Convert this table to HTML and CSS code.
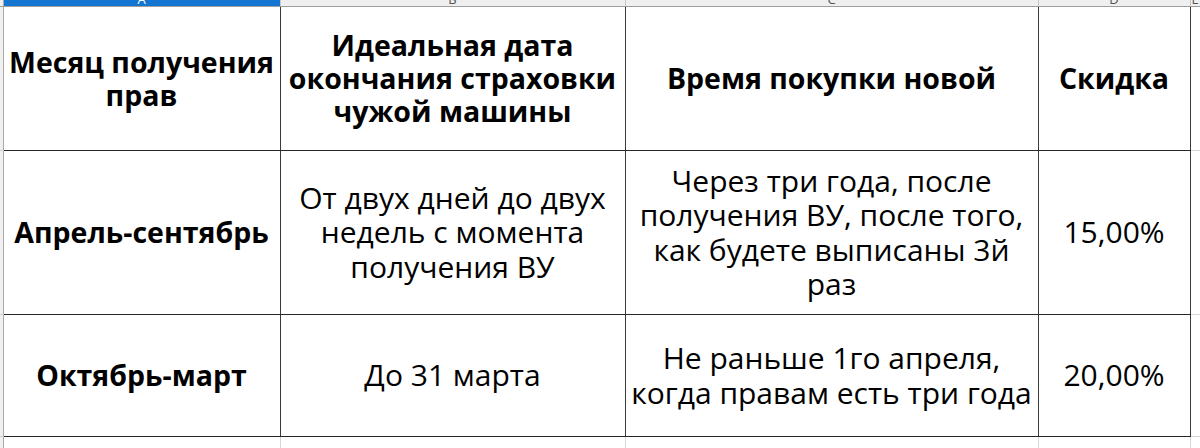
FILE: index.html
```html
<!DOCTYPE html>
<html lang="ru">
<head>
<meta charset="utf-8">
<title>Скидка</title>
<link rel="stylesheet" href="styles.css">
</head>
<body>
<table class="sheet">
  <colgroup>
    <col class="c-rh"><col class="c-a"><col class="c-b"><col class="c-c"><col class="c-d"><col class="c-e">
  </colgroup>
  <tr class="colhead">
    <th class="rh"></th>
    <th class="sel"><span>A</span></th>
    <th><span>B</span></th>
    <th><span>C</span></th>
    <th><span>D</span></th>
    <th class="edge"><span>E</span></th>
  </tr>
  <tr class="r-head first">
    <th class="rh"></th>
    <td class="bold">Месяц получения<br>прав</td>
    <td class="bold">Идеальная дата<br>окончания страховки<br>чужой машины</td>
    <td class="bold">Время покупки новой</td>
    <td class="bold">Скидка</td>
    <td class="grid"></td>
  </tr>
  <tr class="r-one">
    <th class="rh"></th>
    <td class="bold">Апрель-сентябрь</td>
    <td>От двух дней до двух<br>недель с момента<br>получения ВУ</td>
    <td>Через три года, после<br>получения ВУ, после того,<br>как будете выписаны 3й<br>раз</td>
    <td>15,00%</td>
    <td class="grid"></td>
  </tr>
  <tr class="r-two">
    <th class="rh"></th>
    <td class="bold">Октябрь-март</td>
    <td>До 31 марта</td>
    <td>Не раньше 1го апреля,<br>когда правам есть три года</td>
    <td>20,00%</td>
    <td class="grid"></td>
  </tr>
  <tr class="r-empty">
    <th class="rh"></th>
    <td class="grid"></td>
    <td class="grid"></td>
    <td class="grid"></td>
    <td class="grid"></td>
    <td class="grid"></td>
  </tr>
</table>
</body>
</html>
```
FILE: styles.css
```css
html, body {
  margin: 0;
  padding: 0;
  background: #ffffff;
  overflow: hidden;
}

.sheet {
  border-collapse: collapse;
  table-layout: fixed;
  width: 1200px;
  font-family: "Open Sans", "Noto Sans", sans-serif;
  color: #000;
}

.c-rh { width: 3px; }
.c-a { width: 277px; }
.c-b { width: 345px; }
.c-c { width: 413px; }
.c-d { width: 152px; }
.c-e { width: 10px; }

.sheet td,
.sheet th {
  padding: 0;
  text-align: center;
  vertical-align: middle;
  white-space: nowrap;
  overflow: hidden;
}

/* column header strip */
.colhead th {
  height: 6px;
  background: #efefef;
  border-right: 1px solid #c6c6c6;
  border-bottom: 1px solid #9e9e9e;
  font: 400 13px/6px "Open Sans", sans-serif;
  color: #555;
  vertical-align: top;
}
.colhead th span {
  display: block;
  height: 6px;
  line-height: 6px;
  margin-top: -4px;
}
.colhead th.sel {
  background: #1476d2;
  color: #fff;
}
.colhead th.rh {
  background: #efefef;
}

/* row header strip */
.sheet th.rh {
  background: #f0f0f0;
  border-right: 1px solid #a9a9a9;
  border-bottom: 1px solid #d0d0d0;
}
.colhead th.rh {
  border-bottom: 1px solid #9e9e9e;
}

/* data cells */
.sheet td {
  border-right: 1px solid #3a3a3a;
  border-bottom: 1px solid #262626;
  font-size: 30px;
  line-height: 34.5px;
  font-weight: 400;
}
.sheet td.bold {
  font-size: 28.5px;
  line-height: 33px;
  font-weight: 700;
}
.sheet td.grid {
  border-right: 1px solid #d6d6d6;
  border-bottom: 1px solid #d6d6d6;
}

.r-head td { height: 143px; }
.r-one td { height: 163px; }
.r-two td { height: 121px; }
.r-empty td { height: 30px; }
```
